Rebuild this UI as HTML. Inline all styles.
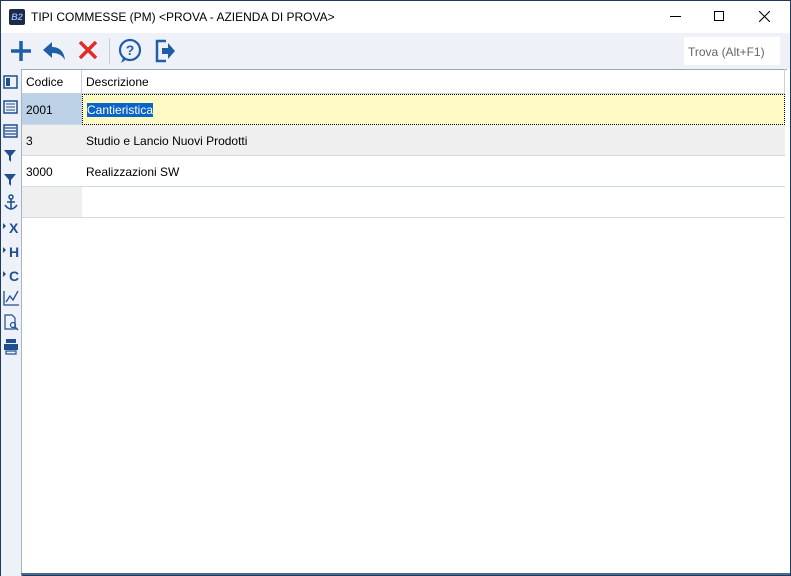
<!DOCTYPE html><html><head><style>
*{margin:0;padding:0;box-sizing:border-box}
body{width:791px;height:576px;overflow:hidden;background:#1f3a5a;font-family:"Liberation Sans",sans-serif;font-size:12px;color:#000;position:relative}
#win{position:absolute;left:1px;top:1px;right:1px;bottom:1px;background:#fff}
#title{position:absolute;left:0;top:0;width:789px;height:32px;background:#fff}
#tb{position:absolute;left:0;top:32px;width:789px;height:36px;background:#eef2f8}
#side{position:absolute;left:0;top:68px;width:20px;height:507px;background:#eef2f8}
.ab{position:absolute}
.hd{position:absolute;top:69px;height:24px;border-right:1px solid #c8d0dc;border-bottom:1px solid #c8d0dc;background:#fff;padding:5px 4px;font-size:12px}
.c{position:absolute;height:31px;padding:9px 4px;border-bottom:1px solid #d0dbe8}
</style></head><body><div id="win">
<div id="title">
<div class="ab" style="left:8px;top:8px;width:16px;height:16px;background:#1c2a44;border-radius:2px;color:#8ab4ff;font-size:9px;font-style:italic;font-weight:bold;text-align:center;line-height:16px">B2</div>
<div class="ab" style="left:30px;top:9px;font-size:12px">TIPI COMMESSE (PM) &lt;PROVA - AZIENDA DI PROVA&gt;</div>
<div class="ab" style="left:669px;top:15px;width:11px;height:1px;background:#000"></div>
<div class="ab" style="left:713px;top:10px;width:10px;height:10px;border:1px solid #000"></div>
<svg class="ab" style="left:758px;top:10px" width="11" height="11"><path d="M0 0L11 11M11 0L0 11" stroke="#000" stroke-width="1.1"/></svg>
</div>
<div id="tb">
<svg class="ab" style="left:8px;top:6px" width="24" height="24"><path d="M12 2V22M2 12H22" stroke="#1f5fa8" stroke-width="3.5"/></svg>
<svg class="ab" style="left:40px;top:6px" width="26" height="24"><path d="M2 11L11 3V8C18 8 23 12 24 21C21 16 17 14 11 14V19Z" fill="#1f5fa8"/></svg>
<svg class="ab" style="left:76px;top:6px" width="22" height="22"><path d="M3 3L19 19M19 3L3 19" stroke="#e52a2a" stroke-width="3.5"/></svg>
<div class="ab" style="left:108px;top:5px;width:1px;height:26px;background:#c9d0da"></div>
<svg class="ab" style="left:116px;top:5px" width="26" height="26"><circle cx="13" cy="12" r="10" fill="none" stroke="#1f5fa8" stroke-width="2.2"/><path d="M6 20L4 25L10 21" fill="#1f5fa8"/><text x="13" y="17" text-anchor="middle" font-size="14" font-weight="bold" fill="#1f5fa8" font-family="Liberation Sans">?</text></svg>
<svg class="ab" style="left:152px;top:5px" width="24" height="26"><path d="M13 3H4V23H13" fill="none" stroke="#1f5fa8" stroke-width="2.5"/><path d="M9 10H15V5L22 13L15 21V16H9Z" fill="#1f5fa8"/></svg>
<div class="ab" style="left:683px;top:4px;width:96px;height:28px;background:#fff;color:#666;font-size:12px;padding:8px 4px">Trova (Alt+F1)</div>
</div>
<div id="side">
<svg width="20" height="300" style="position:absolute;left:0;top:4px" fill="#1f4f8f" stroke="#1f4f8f">
<rect x="3" y="3" width="13" height="12" fill="none" stroke-width="1.5"/><rect x="5" y="5" width="4" height="8" stroke="none"/>
<rect x="3" y="28" width="13" height="12" fill="none" stroke-width="1.5"/><path d="M5 31H14M5 34H14M5 37H14" stroke-width="1"/>
<rect x="3" y="52" width="13" height="12" fill="none" stroke-width="1.5"/><path d="M4 55H15M4 58H15M4 61H15" stroke-width="1.3"/>
<path d="M3 77H15L10 83V89L8 87V83Z" stroke="none"/><path d="M3 101H15L10 107V113L8 111V107Z" stroke="none"/>
<circle cx="10" cy="124" r="2" fill="none" stroke-width="1.5"/><path d="M10 126V136M6 129H14M4 132Q10 140 16 132" fill="none" stroke-width="1.6"/>
<text x="8" y="160" font-size="14" font-weight="bold" stroke="none" font-family="Liberation Sans">X</text><path d="M2 150L5 153L2 156Z" stroke="none"/>
<text x="8" y="184" font-size="14" font-weight="bold" stroke="none" font-family="Liberation Sans">H</text><path d="M2 174L5 177L2 180Z" stroke="none"/>
<text x="8" y="208" font-size="14" font-weight="bold" stroke="none" font-family="Liberation Sans">C</text><path d="M2 198L5 201L2 204Z" stroke="none"/>
<path d="M3 218V232H18M5 229L9 223L12 227L17 218" fill="none" stroke-width="1.3"/>
<path d="M4 242H11L14 245V256H4Z" fill="none" stroke-width="1.2"/><circle cx="12" cy="252" r="2.5" fill="none" stroke-width="1.2"/><path d="M14 254L17 257" stroke-width="1.5"/>
<rect x="5" y="266" width="10" height="4" stroke="none"/><rect x="3" y="271" width="14" height="6" stroke="none"/><rect x="5" y="278" width="10" height="3" fill="none" stroke-width="1.2"/>
</svg></div>
<div class="ab" style="left:20px;top:68px;width:1px;height:507px;background:#a8b4c4"></div>
<div class="ab" style="left:21px;top:68px;width:765px;height:1px;background:#9aa8ba"></div>
<div class="ab" style="left:783px;top:68px;width:1px;height:25px;background:#c8d0dc"></div>
<div class="hd" style="left:21px;width:60px">Codice</div>
<div class="hd" style="left:81px;width:703px">Descrizione</div>
<div class="c" style="left:21px;top:93px;width:60px;background:#bcd0e6">2001</div>
<div class="c" style="left:81px;top:93px;width:703px;background:#fff9c4;border:1px dotted #000;padding:8px 4px"><span style="background:#0a64c8;color:#fff">Cantieristica</span></div>
<div class="c" style="left:21px;top:124px;width:60px;background:#efefef">3</div>
<div class="c" style="left:81px;top:124px;width:703px;background:#efefef">Studio e Lancio Nuovi Prodotti</div>
<div class="c" style="left:21px;top:155px;width:60px;background:#fff">3000</div>
<div class="c" style="left:81px;top:155px;width:703px;background:#fff">Realizzazioni SW</div>
<div class="c" style="left:21px;top:186px;width:60px;background:#efefef"></div>
<div class="c" style="left:81px;top:186px;width:703px;background:#fff"></div>
<div class="ab" style="left:20px;top:572px;width:769px;height:2px;background:#4a6a90"></div>
</div></body></html>
